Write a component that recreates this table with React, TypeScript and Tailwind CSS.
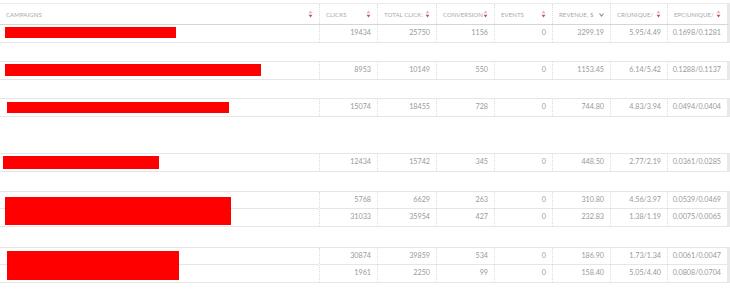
import React from "react";

const COLS = "grid grid-cols-[320px_58px_59px_58px_58px_58px_57px_59px]";

const headers = ["CAMPAIGNS", "CLICKS", "TOTAL CLICK:", "CONVERSION", "EVENTS", "REVENUE, $", "CR(UNIQUE/", "EPC(UNIQUE/"];

type Group = {
  gap: string;
  bar: { w: number; h: number; ml: number; mt: number };
  rows: string[][];
};

const groups: Group[] = [
  { gap: "h-0", bar: { w: 171, h: 11, ml: 5, mt: 2 }, rows: [["19434", "25750", "1156", "0", "3299.19", "5.95/4.49", "0.1698/0.1281"]] },
  { gap: "h-[18px]", bar: { w: 256, h: 12, ml: 5, mt: 2 }, rows: [["8953", "10149", "550", "0", "1153.45", "6.14/5.42", "0.1288/0.1137"]] },
  { gap: "h-[18px]", bar: { w: 222, h: 11, ml: 7, mt: 3 }, rows: [["15074", "18455", "728", "0", "744.80", "4.83/3.94", "0.0494/0.0404"]] },
  { gap: "h-[36px]", bar: { w: 156, h: 13, ml: 3, mt: 2 }, rows: [["12434", "15742", "345", "0", "448.50", "2.77/2.19", "0.0361/0.0285"]] },
  { gap: "h-[19px]", bar: { w: 226, h: 28, ml: 5, mt: 5 }, rows: [["5768", "6629", "263", "0", "310.80", "4.56/3.97", "0.0539/0.0469"], ["31033", "35954", "427", "0", "232.83", "1.38/1.19", "0.0075/0.0065"]] },
  { gap: "h-[20px]", bar: { w: 172, h: 29, ml: 7, mt: 3 }, rows: [["30874", "39859", "534", "0", "186.90", "1.73/1.34", "0.0061/0.0047"], ["1961", "2250", "99", "0", "158.40", "5.05/4.40", "0.0808/0.0704"]] },
];

function SortIcon({ active }: { active?: boolean }) {
  if (active) {
    return (
      <svg width="5" height="7" viewBox="0 0 5 7" className="shrink-0">
        <path d="M0.5 2.5 L2.5 5 L4.5 2.5" fill="none" stroke="#8a8a8a" strokeWidth="1.1" />
      </svg>
    );
  }
  return (
    <svg width="5" height="8" viewBox="0 0 5 8" className="shrink-0">
      <path d="M2.5 0.5 L4.5 3.3 L0.5 3.3 Z" fill="#c4c4c4" />
      <path d="M2.5 7.5 L4.5 4.7 L0.5 4.7 Z" fill="#e04848" />
    </svg>
  );
}

export default function App() {
  return (
    <div className="w-[730px] h-[289px] bg-white overflow-hidden font-['Lato','Liberation_Sans',sans-serif] text-[#9a9a9a]">
      <div className="h-[3px]" />
      {/* header */}
      <div className={`${COLS} h-[22px] border-t border-[#ececec] border-r-[3px] border-r-[#e9e9e9] border-b border-b-[#d6d6d6] border-b-dotted`}>
        {headers.map((h, i) => (
          <div
            key={h}
            className={`flex items-center justify-between pl-[6px] pr-[6px] text-[6px] tracking-[0.1px] text-[#a8a8a8] ${i < headers.length - 1 ? "border-r border-dotted border-[#dcdcdc]" : ""}`}
          >
            <span className="whitespace-nowrap overflow-hidden">{h}</span>
            <SortIcon active={i === 5} />
          </div>
        ))}
      </div>

      {groups.map((g, gi) => {
        const two = g.rows.length === 2;
        return (
          <div key={gi}>
            <div className={g.gap} />
            <div
              className={`${COLS} ${two ? "grid-rows-[17px_17px]" : "grid-rows-[17px]"} border-b border-[#e6e6e6] border-r-[3px] border-r-[#e9e9e9] ${gi > 0 ? "border-t" : ""}`}
            >
              <div className={`${two ? "row-span-2" : ""} relative border-r border-dotted border-[#dcdcdc]`}>
                {two && <div className="h-[17px] shadow-[inset_0_-1px_0_#e6e6e6]" />}
                {/* redacted campaign name */}
                <div
                  className="absolute top-0 left-0 bg-[#ff0000]"
                  style={{ width: g.bar.w, height: g.bar.h, marginLeft: g.bar.ml, marginTop: g.bar.mt }}
                />
              </div>
              {g.rows.map((r, ri) =>
                r.map((v, ci) => (
                  <div
                    key={`${ri}-${ci}`}
                    className={`flex items-center justify-end pr-[6px] text-[7.2px] ${ci < r.length - 1 ? "border-r border-dotted border-[#dcdcdc]" : ""} ${ri === 0 && two ? "shadow-[inset_0_-1px_0_#e6e6e6]" : ""}`}
                    style={{ gridRow: ri + 1, gridColumn: ci + 2 }}
                  >
                    {v}
                  </div>
                ))
              )}
            </div>
          </div>
        );
      })}
    </div>
  );
}
